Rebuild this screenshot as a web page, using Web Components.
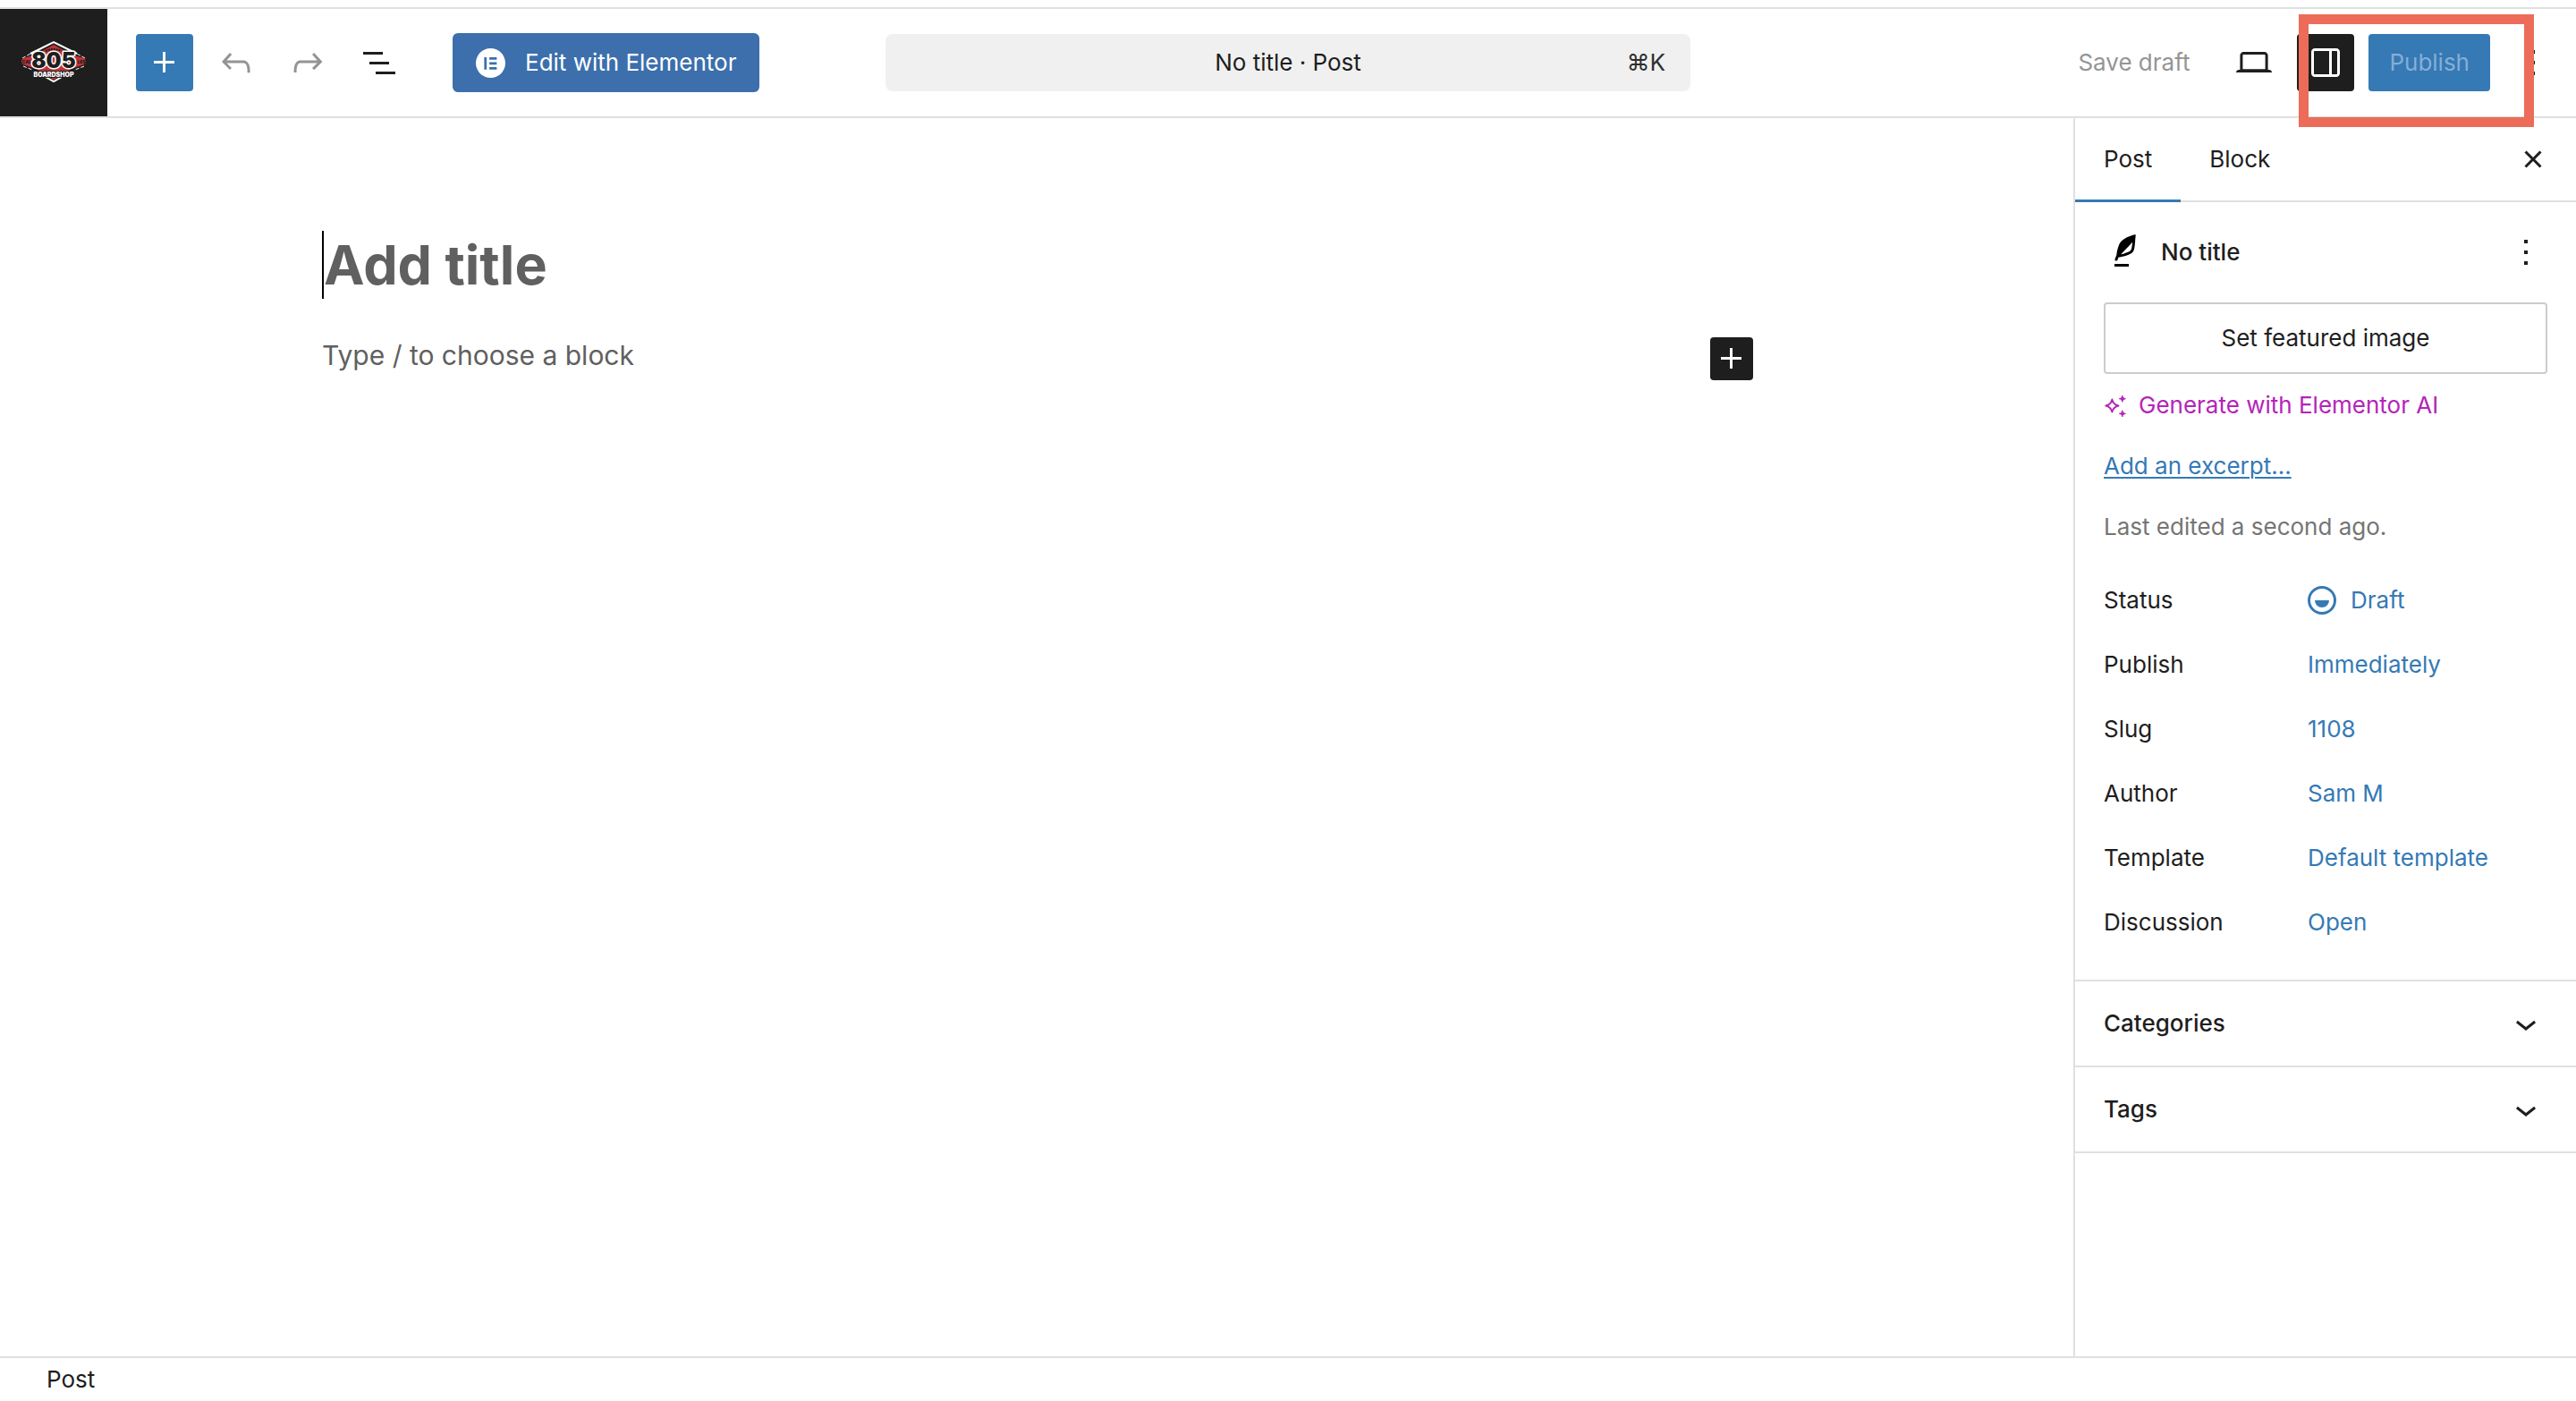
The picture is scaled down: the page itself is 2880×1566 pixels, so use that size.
<!DOCTYPE html>
<html lang="en">
<head>
<meta charset="utf-8">
<title>Add Post</title>
<style>
  html, body {
    height: 100%;
    margin: 0;
  }
  body {
    background: #fff;
    color: #1e1e1e;
    font: 26px/32px Inter, "DejaVu Sans", sans-serif;
    --accent: #3579b5;
    --line: #e0e0e0;
    --muted: #949494;
  }
</style>
</head>
<body>
<post-editor></post-editor>

<script>
const icons = {
  plus: '<path d="M11 12.5V17.5H12.5V12.5H17.5V11H12.5V6H11V11H6V12.5H11Z"/>',
  undo: '<path d="M18.3 11.7c-.6-.6-1.4-.9-2.3-.9H6.7l2.9-3.3-1.1-1-4.5 5L8.5 16l1-1-2.7-2.7H16c.5 0 .9.2 1.3.5 1 1 1 3.4 1 4.5v.3h1.5v-.2c0-1.5 0-4.3-1.5-5.7z"/>',
  redo: '<path d="M15.6 6.5l-1.1 1 2.9 3.3H8c-.9 0-1.7.3-2.3.9-1.4 1.5-1.4 4.2-1.4 5.6v.2h1.5v-.3c0-1.1 0-3.5 1-4.5.3-.3.7-.5 1.3-.5h9.2L14.5 15l1.1 1.1 4.6-4.6-4.6-5z"/>',
  list: '<path d="M3 6h11v1.5H3V6Zm3.5 5.5h11V13h-11v-1.5ZM21 17H10v1.5h11V17Z"/>',
  laptop: '<path d="M20.5 16h-.7V8c0-1.1-.9-2-2-2H6.2c-1.1 0-2 .9-2 2v8h-.7c-.8 0-1.5.7-1.5 1.5h20c0-.8-.7-1.5-1.5-1.5zM5.7 8c0-.3.2-.5.5-.5h11.6c.3 0 .5.2.5.5v7.6H5.7V8z"/>',
  drawer: '<path d="M18 4H6c-1.1 0-2 .9-2 2v12c0 1.1.9 2 2 2h12c1.1 0 2-.9 2-2V6c0-1.1-.9-2-2-2zm-4 14.5H6c-.3 0-.5-.2-.5-.5V6c0-.3.2-.5.5-.5h8v13zm4.5-.5c0 .3-.2.5-.5.5h-2.5v-13H18c.3 0 .5.2.5.5v12z"/>',
  more: '<path d="M13 19h-2v-2h2v2zm0-6h-2v-2h2v2zm0-6h-2V5h2v2z"/>',
  close: '<path d="M12 13.06l3.712 3.713 1.061-1.06L13.061 12l3.712-3.712-1.06-1.06L12 10.938 8.288 7.227l-1.061 1.06L10.939 12l-3.712 3.712 1.06 1.061L12 13.061z"/>',
  chevron: '<path d="M17.5 11.6L12 16l-5.5-4.4.9-1.2L12 14l4.6-3.6.9 1.2z"/>',
  feather: '<path d="M17.8 2l-.9.3c-.1 0-3.6 1-5.2 2.1C10 5.5 9.3 6.5 8.9 7.1c-.6.9-1.7 4.7-1.7 6.3l-.9 2.3c-.2.4 0 .8.4 1 .1 0 .2.1.3.1.3 0 .6-.2.7-.5l.6-1.5c.3 0 .7-.1 1.2-.2.7-.1 1.4-.3 2.2-.5.8-.2 1.6-.5 2.4-.8.7-.3 1.4-.7 1.9-1.2s.8-1.2 1-1.9c.2-.7.3-1.6.4-2.4.1-.8.1-1.7.2-2.5 0-.8.1-1.5.2-2.1V2zm-1.9 5.6c-.1.8-.2 1.5-.3 2.1-.2.6-.4 1-.6 1.3-.3.3-.8.6-1.4.9-.7.3-1.4.5-2.2.8-.6.2-1.3.3-1.8.4L15 7.5c.3-.3.6-.7 1-1.1 0 .4 0 .8-.1 1.2zM6 20h8v-1.5H6V20z"/>',
  draft: '<circle cx="12" cy="12" r="7.25" fill="none" stroke="currentColor" stroke-width="1.5"/><path d="M8 12h8a4 4 0 0 1-8 0z"/>',
  elementor: '<path fill-rule="evenodd" d="M12 0a12 12 0 1 0 0 24 12 12 0 0 0 0-24zM6.8 7.2h2v10h-2zM11 7.2h6v2h-6zM11 11.2h6v2h-6zM11 15.2h6v2h-6z"/>',
  sparkle: '<path d="M9 5.2c.9 3.9 2.9 5.9 6.8 6.8-3.9.9-5.9 2.9-6.8 6.8-.9-3.9-2.9-5.9-6.8-6.8C6.1 11.1 8.1 9.1 9 5.2z" fill="none" stroke="currentColor" stroke-width="1.8" stroke-linejoin="round"/><path d="M20 1c.5 2.2 1.3 3 3.5 3.5-2.2.5-3 1.3-3.5 3.5-.5-2.2-1.3-3-3.5-3.5C18.7 4 19.5 3.2 20 1zM20 17c.5 2.2 1.3 3 3.5 3.5-2.2.5-3 1.3-3.5 3.5-.5-2.2-1.3-3-3.5-3.5 2.2-.5 3-1.3 3.5-3.5z" stroke="currentColor" stroke-width=".8" stroke-linejoin="round"/>',
};

// Controls shared by every component
const base = `
  * { box-sizing: border-box; }
  button {
    appearance: none;
    background: none;
    border: 0;
    color: inherit;
    cursor: pointer;
    font: inherit;
    margin: 0;
    padding: 0;
  }
`;

function define(name, html, setup) {
  const template = document.createElement("template");
  template.innerHTML = html;
  customElements.define(name, class extends HTMLElement {
    constructor() {
      super();
      this.attachShadow({ mode: "open" });
      this.shadowRoot.appendChild(template.content.cloneNode(true));
    }
    connectedCallback() {
      if (setup) setup(this, this.shadowRoot);
    }
  });
}

define("editor-icon", `
  <style>
    :host { display: block; flex: none; width: 48px; height: 48px; }
    svg { display: block; width: 100%; height: 100%; fill: currentColor; }
  </style>
  <svg viewBox="0 0 24 24" aria-hidden="true"></svg>
`, (host, root) => {
  root.querySelector("svg").innerHTML = icons[host.getAttribute("name")];
});

define("icon-button", `
  <style>
    ${base}
    :host { display: block; flex: none; }
    button {
      display: flex;
      align-items: center;
      justify-content: center;
      width: var(--size, 64px);
      height: var(--size, 64px);
      border-radius: 4px;
    }
    :host([variant="primary"]) button { background: var(--accent); color: #fff; }
    :host([variant="dark"]) button { background: #1e1e1e; color: #fff; }
    :host([disabled]) button { color: var(--muted); }
  </style>
  <button type="button"></button>
`, (host, root) => {
  const button = root.querySelector("button");
  button.setAttribute("aria-label", host.getAttribute("label"));
  button.disabled = host.hasAttribute("disabled");
  const icon = document.createElement("editor-icon");
  icon.setAttribute("name", host.getAttribute("icon"));
  button.replaceChildren(icon);
});

define("site-logo", `
  <style>
    :host { display: block; flex: none; width: 120px; height: 120px; background: #1e1e1e; }
    a, svg { display: block; width: 100%; height: 100%; }
    text { font-family: Inter, sans-serif; font-weight: 900; text-anchor: middle; }
  </style>
  <a href="#" aria-label="View posts">
    <svg viewBox="0 0 120 120">
      <path d="M34 50L60 37L86 50M42 71L60 81L78 71" fill="none" stroke="#fff" stroke-width="2"/>
      <path d="M25 55L34 50M95 55L86 50M26 64L36 68M94 64L84 68" fill="none" stroke="#fff" stroke-width="1" stroke-dasharray="4 2"/>
      <path d="M60 40L80 51L94 55Q98 59 94 62L80 67L60 79L40 67L26 62Q22 59 26 55L40 51Z" fill="#bf3338"/>
      <path d="M51 47Q60 43 69 47" fill="none" stroke="#1e1e1e" stroke-width="2" stroke-dasharray="2 1"/>
      <text x="30" y="61" font-size="5" fill="#1e1e1e">CAL</text>
      <text x="91" y="61" font-size="5" fill="#1e1e1e">LES</text>
      <text x="60" y="66" font-size="24" fill="#1e1e1e" stroke="#fff" stroke-width="3" stroke-linejoin="round" paint-order="stroke">805</text>
      <text x="60" y="76" font-size="7" fill="#fff" stroke="#1e1e1e" stroke-width="2" paint-order="stroke">BOARDSHOP</text>
    </svg>
  </a>
`);

define("command-bar", `
  <style>
    ${base}
    :host { display: block; }
    button {
      display: grid;
      grid-template-columns: 1fr auto 1fr;
      align-items: center;
      width: 100%;
      height: 64px;
      padding: 0 28px;
      border-radius: 8px;
      background: #f0f0f0;
    }
    .title { grid-column: 2; }
    .shortcut { justify-self: end; color: #2f2f2f; }
  </style>
  <button type="button">
    <span class="title"><slot></slot></span>
    <span class="shortcut">⌘K</span>
  </button>
`);

define("editor-header", `
  <style>
    ${base}
    :host {
      display: grid;
      grid-template-columns: 1fr minmax(300px, 900px) 1fr;
      align-items: center;
      height: 124px;
      border-top: 2px solid var(--line);
      border-bottom: 2px solid var(--line);
      box-sizing: border-box;
    }
    .tools, .actions { display: flex; align-items: center; gap: 16px; white-space: nowrap; }
    site-logo { margin-right: 16px; }
    .elementor {
      display: flex;
      align-items: center;
      gap: 22px;
      height: 66px;
      margin-left: 34px;
      padding: 0 26px;
      border-radius: 6px;
      background: #3c6fac;
      color: #fff;
    }
    .elementor editor-icon { width: 33px; height: 33px; }
    .actions { justify-content: flex-end; padding-right: 16px; }
    .save { padding: 0 24px; color: var(--muted); }
    .publish {
      height: 64px;
      padding: 0 23px;
      border-radius: 4px;
      background: var(--accent);
      color: #86aed4;
    }
    .highlighted { display: flex; gap: 16px; position: relative; }
    /* marks the sidebar toggle and the publish button */
    .highlighted::after {
      content: "";
      position: absolute;
      inset: -22px -49px -40px 2px;
      border: 11px solid #ec6c59;
      pointer-events: none;
      z-index: 1;
    }
  </style>
  <div class="tools">
    <site-logo></site-logo>
    <icon-button icon="plus" variant="primary" label="Block Inserter"></icon-button>
    <icon-button icon="undo" disabled label="Undo"></icon-button>
    <icon-button icon="redo" disabled label="Redo"></icon-button>
    <icon-button icon="list" label="Document Overview"></icon-button>
    <button class="elementor" type="button"><editor-icon name="elementor"></editor-icon>Edit with Elementor</button>
  </div>
  <command-bar>No title · Post</command-bar>
  <div class="actions">
    <button class="save" type="button" disabled>Save draft</button>
    <icon-button icon="laptop" label="View"></icon-button>
    <div class="highlighted">
      <icon-button icon="drawer" variant="dark" label="Settings"></icon-button>
      <button class="publish" type="button" disabled>Publish</button>
    </div>
    <icon-button icon="more" label="Options"></icon-button>
  </div>
`);

define("editor-canvas", `
  <style>
    ${base}
    :host { display: block; flex: 1; min-width: 0; padding: 126px 40px 0 42px; }
    .content { max-width: 1600px; margin: 0 auto; }
    input {
      display: block;
      width: 100%;
      padding: 0;
      border: 0;
      outline: 0;
      background: none;
      color: inherit;
      font: inherit;
    }
    input::placeholder { color: #606060; opacity: 1; }
    /* the left border stands in for the text caret */
    .title {
      height: 76px;
      border-left: 2px solid #000;
      font-size: 61px;
      font-weight: 700;
    }
    .block {
      display: flex;
      align-items: flex-start;
      height: 48px;
      margin-top: 43px;
      font-size: 30px;
    }
    .block input { height: 40px; }
    icon-button { --size: 48px; }
  </style>
  <div class="content">
    <input class="title" type="text" placeholder="Add title" aria-label="Add title">
    <div class="block">
      <input type="text" placeholder="Type / to choose a block" aria-label="Empty block">
      <icon-button icon="plus" variant="dark" label="Add block"></icon-button>
    </div>
  </div>
`);

define("post-row", `
  <style>
    ${base}
    :host { display: flex; align-items: center; height: 64px; }
    .label { flex: none; width: 228px; }
    button { display: flex; align-items: center; gap: 16px; color: var(--accent); white-space: nowrap; }
  </style>
  <span class="label" id="label"></span>
  <button type="button" aria-describedby="label"><slot name="icon"></slot><slot></slot></button>
`, (host, root) => {
  root.querySelector(".label").textContent = host.getAttribute("label");
});

define("panel-toggle", `
  <style>
    ${base}
    :host { display: block; border-bottom: 2px solid var(--line); }
    button {
      display: flex;
      align-items: center;
      justify-content: space-between;
      width: 100%;
      height: 94px;
      padding: 0 32px;
      font-weight: 500;
    }
  </style>
  <button type="button" aria-expanded="false"><slot></slot><editor-icon name="chevron"></editor-icon></button>
`);

define("settings-sidebar", `
  <style>
    ${base}
    :host { display: block; flex: none; width: 562px; border-left: 2px solid var(--line); box-sizing: border-box; }
    .tabs { display: flex; align-items: stretch; height: 94px; border-bottom: 2px solid var(--line); }
    .tabs > button { padding: 0 32px; margin-bottom: -2px; border-bottom: 3px solid transparent; }
    .tabs > button[aria-selected="true"] { border-color: var(--accent); }
    .tabs icon-button { align-self: center; margin: 0 16px 0 auto; }
    .summary { padding: 32px; border-bottom: 2px solid var(--line); }
    .card { display: flex; align-items: center; gap: 16px; height: 48px; font-weight: 500; }
    .card editor-icon { color: #000; }
    .card icon-button { --size: 48px; margin-left: auto; }
    .image {
      display: block;
      width: 100%;
      height: 80px;
      margin-top: 32px;
      border: 2px solid #ccc;
      border-radius: 4px;
    }
    .ai { display: flex; align-items: center; gap: 14px; margin-top: 19px; color: #b524b8; }
    .ai editor-icon { width: 25px; height: 25px; }
    a {
      display: block;
      width: max-content;
      margin-top: 36px;
      color: var(--accent);
      text-decoration-thickness: 2px;
      text-underline-offset: 3px;
    }
    p { margin: 36px 0 34px; color: #757575; }
    .rows { display: flex; flex-direction: column; gap: 8px; }
    .rows editor-icon { margin: -8px; }
  </style>
  <div class="tabs" role="tablist">
    <button type="button" role="tab" aria-selected="true">Post</button>
    <button type="button" role="tab" aria-selected="false">Block</button>
    <icon-button icon="close" label="Close Settings"></icon-button>
  </div>
  <div class="summary">
    <div class="card">
      <editor-icon name="feather"></editor-icon>
      <span>No title</span>
      <icon-button icon="more" label="Actions"></icon-button>
    </div>
    <button class="image" type="button">Set featured image</button>
    <button class="ai" type="button"><editor-icon name="sparkle"></editor-icon>Generate with Elementor AI</button>
    <a href="#">Add an excerpt…</a>
    <p>Last edited a second ago.</p>
    <div class="rows">
      <post-row label="Status"><editor-icon slot="icon" name="draft"></editor-icon>Draft</post-row>
      <post-row label="Publish">Immediately</post-row>
      <post-row label="Slug">1108</post-row>
      <post-row label="Author">Sam M</post-row>
      <post-row label="Template">Default template</post-row>
      <post-row label="Discussion">Open</post-row>
    </div>
  </div>
  <panel-toggle>Categories</panel-toggle>
  <panel-toggle>Tags</panel-toggle>
`);

define("post-editor", `
  <style>
    ${base}
    :host { display: flex; flex-direction: column; min-height: 100%; padding-top: 8px; box-sizing: border-box; }
    main { display: flex; flex: 1; }
    footer { padding: 8px 52px; border-top: 2px solid var(--line); }
  </style>
  <editor-header></editor-header>
  <main>
    <editor-canvas></editor-canvas>
    <settings-sidebar></settings-sidebar>
  </main>
  <footer>Post</footer>
`);
</script>
</body>
</html>
